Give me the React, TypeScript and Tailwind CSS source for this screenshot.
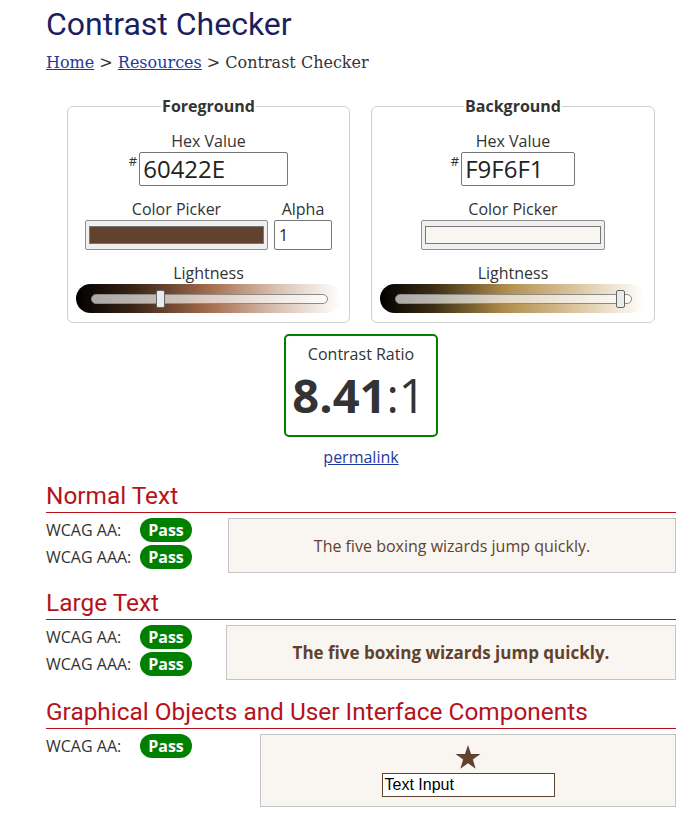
import React from "react";

interface SliderProps {
  gradient: string;
  value: number;
}

// lightness slider: gradient strip with a translucent track and a thumb
const LightnessSlider: React.FC<SliderProps> = ({ gradient, value }) => {
  return (
    <div className={`flex h-[29px] w-[265px] items-center rounded-full pl-[15px] pr-[13px] ${gradient}`}>
      <div className="relative h-[10px] flex-1 rounded-full border border-[#8a8a8a] bg-white/65">
        <div
          className="absolute top-[-5px] h-[18px] w-[9px] rounded-[2px] border border-[#666] bg-[#ebebeb]"
          style={{ left: `calc(${value * 100}% - 4px)` }}
        />
      </div>
    </div>
  );
};

const PassBadge: React.FC = () => (
  <span className="inline-flex h-[24px] w-[52px] items-center justify-center rounded-full bg-[#008000] text-[16px] font-bold text-white">
    Pass
  </span>
);

const WcagRow: React.FC<{ label: string }> = ({ label }) => (
  <div className="flex h-[24px] items-center">
    <span className="w-[94px] text-[16px] text-[#333]">{label}</span>
    <PassBadge />
  </div>
);

const SectionHeading: React.FC<{ children: React.ReactNode }> = ({ children }) => (
  <h2 className="border-b-[1.5px] border-[#b5121b] pb-[2px] font-['Roboto',sans-serif] text-[24.4px] leading-[28px] text-[#b5121b]">
    {children}
  </h2>
);

const Star: React.FC = () => (
  <svg width="26" height="26" viewBox="0 0 24 24" className="fill-[#60422E]">
    <polygon points="12,1 14.8,9.2 23.5,9.2 16.5,14.4 19.1,22.8 12,17.7 4.9,22.8 7.5,14.4 0.5,9.2 9.2,9.2" />
  </svg>
);

export default function App() {
  return (
    <div className="min-h-[820px] bg-white pl-[46px] pr-[13px] font-['Open_Sans',sans-serif] text-[#333]">
      {/* Title */}
      <h1 className="pt-[5px] font-['Roboto',sans-serif] text-[32px] leading-[38px] text-[#1b1f5e]">
        Contrast Checker
      </h1>

      {/* Breadcrumb */}
      <nav className="mt-[8px] font-['DejaVu_Serif',serif] text-[16px] leading-[24px] text-[#333]">
        <a href="#" className="text-[#1f3a9e] underline">Home</a> &gt;{" "}
        <a href="#" className="text-[#1f3a9e] underline">Resources</a> &gt; Contrast Checker
      </nav>

      {/* Colour fieldsets */}
      <div className="mt-[19px] flex justify-center gap-[21px]">
        <fieldset className="w-[283px] rounded-[6px] border border-[#cfcfcf] px-[8px] pb-[9px]">
          <legend className="mx-auto px-px text-[16px] font-bold leading-[24px] text-[#333]">Foreground</legend>
          <div className="mt-[13px] text-center text-[16px] leading-[20px]">Hex Value</div>
          <div className="mt-[1px] flex justify-center">
            <span className="mr-[2px] mt-[3px] text-[13px] leading-none">#</span>
            <div className="flex h-[34px] w-[149px] items-center rounded-[2px] border border-[#767676] pl-[3px] text-[24px] text-[#222]">
              60422E
            </div>
          </div>
          <div className="mt-[13px] flex justify-center gap-[6px]">
            <div className="flex flex-col items-center">
              <span className="text-[16px] leading-[20px]">Color Picker</span>
              <div className="mt-[1px] h-[30px] w-[183px] rounded-[2px] border border-[#8f8f8f] bg-[#efefef] px-[3px] py-[5px]">
                <div className="h-full border border-[#777] bg-[#60422E]" />
              </div>
            </div>
            <div className="flex flex-col items-center">
              <span className="text-[16px] leading-[20px]">Alpha</span>
              <div className="mt-[1px] flex h-[30px] w-[58px] items-center rounded-[2px] border border-[#767676] pl-[4px] text-[16px] text-[#222]">
                1
              </div>
            </div>
          </div>
          <div className="mt-[13px] text-center text-[16px] leading-[20px]">Lightness</div>
          <div className="mt-[1px]">
            <LightnessSlider
              gradient="bg-[linear-gradient(to_right,#000_0%,#3a2518_22%,#a56c4c_50%,#d8bfb0_75%,#fff_100%)]"
              value={0.289}
            />
          </div>
        </fieldset>

        <fieldset className="w-[284px] rounded-[6px] border border-[#cfcfcf] px-[8px] pb-[9px]">
          <legend className="mx-auto px-px text-[16px] font-bold leading-[24px] text-[#333]">Background</legend>
          <div className="mt-[13px] text-center text-[16px] leading-[20px]">Hex Value</div>
          <div className="mt-[1px] flex justify-center">
            <span className="mr-[2px] mt-[3px] text-[13px] leading-none">#</span>
            <div className="flex h-[34px] w-[114px] items-center rounded-[2px] border border-[#767676] pl-[3px] text-[24px] text-[#222]">
              F9F6F1
            </div>
          </div>
          <div className="mt-[13px] flex justify-center">
            <div className="flex flex-col items-center">
              <span className="text-[16px] leading-[20px]">Color Picker</span>
              <div className="mt-[1px] h-[30px] w-[184px] rounded-[2px] border border-[#8f8f8f] bg-[#efefef] px-[3px] py-[5px]">
                <div className="h-full border border-[#777] bg-[#F9F6F1]" />
              </div>
            </div>
          </div>
          <div className="mt-[13px] text-center text-[16px] leading-[20px]">Lightness</div>
          <div className="mt-[1px]">
            <LightnessSlider
              gradient="bg-[linear-gradient(to_right,#000_0%,#3b2d14_20%,#b38f4d_48%,#dcc8a4_75%,#fff_100%)]"
              value={0.952}
            />
          </div>
        </fieldset>
      </div>

      {/* Ratio */}
      <div className="mt-[11px] flex flex-col items-center">
        <div className="flex h-[103px] w-[154px] flex-col items-center rounded-[5px] border-2 border-[#008000] pt-[8px]">
          <span className="text-[16px] leading-[20px] text-[#333]">Contrast Ratio</span>
          <span className="mt-[6px] pr-[4px] text-[47px] leading-[50px] text-[#333]">
            <b>8.41</b>:1
          </span>
        </div>
        <a href="#" className="mt-[10px] text-[16px] leading-[20px] text-[#1f3a9e] underline">
          permalink
        </a>
      </div>

      {/* Normal text */}
      <section className="mt-[15px]">
        <SectionHeading>Normal Text</SectionHeading>
        <div className="mt-[5px] flex">
          <div className="flex flex-col gap-[3px]">
            <WcagRow label="WCAG AA:" />
            <WcagRow label="WCAG AAA:" />
          </div>
          <div className="ml-auto flex h-[55px] w-[448px] items-center justify-center border border-[#c4c4c4] bg-[#F9F6F1] text-[16px] text-[#60422E]">
            The five boxing wizards jump quickly.
          </div>
        </div>
      </section>

      {/* Large text */}
      <section className="mt-[16px]">
        <SectionHeading>Large Text</SectionHeading>
        <div className="mt-[5px] flex">
          <div className="flex flex-col gap-[3px]">
            <WcagRow label="WCAG AA:" />
            <WcagRow label="WCAG AAA:" />
          </div>
          <div className="ml-auto flex h-[55px] w-[450px] items-center justify-center border border-[#c4c4c4] bg-[#F9F6F1] text-[17px] font-bold text-[#60422E]">
            The five boxing wizards jump quickly.
          </div>
        </div>
      </section>

      {/* Graphical objects */}
      <section className="mt-[18px]">
        <SectionHeading>Graphical Objects and User Interface Components</SectionHeading>
        <div className="mt-[5px] flex">
          <WcagRow label="WCAG AA:" />
          <div className="ml-auto flex h-[73px] w-[416px] flex-col items-center border border-[#c4c4c4] bg-[#F9F6F1] pt-[9px]">
            <Star />
            <div className="mt-[3px] flex h-[24px] w-[173px] items-center border border-[#60422E] bg-white pl-[2px] font-['Liberation_Sans',sans-serif] text-[16px] text-black">
              Text Input
            </div>
          </div>
        </div>
      </section>
    </div>
  );
}
